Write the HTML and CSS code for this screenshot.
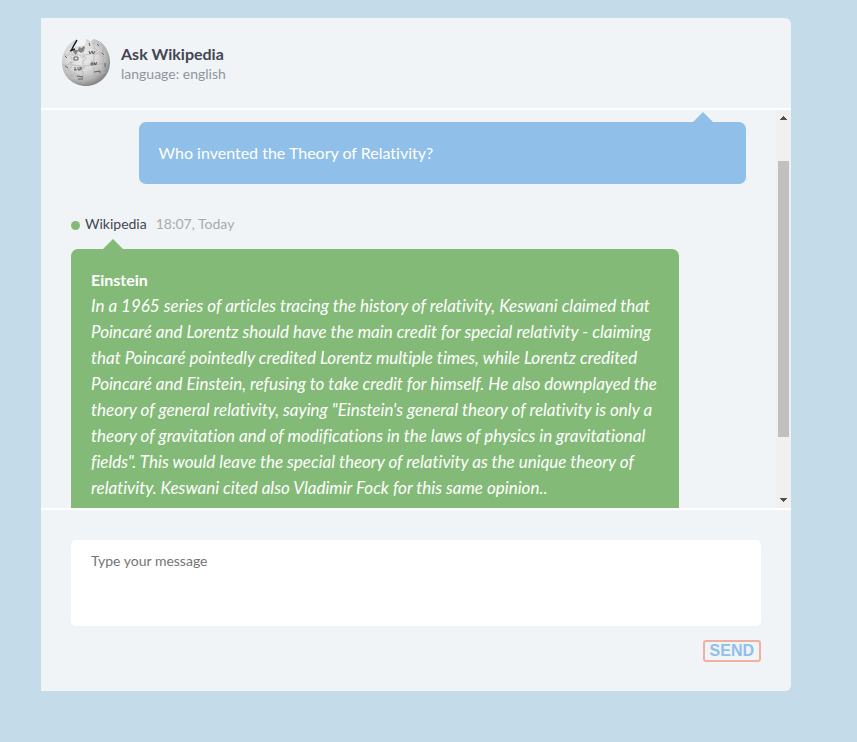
FILE: index.html
```html
<!DOCTYPE html>
<html lang="en">
<head>
<meta charset="utf-8">
<title>Ask Wikipedia</title>
<link rel="stylesheet" href="styles.css">
</head>
<body>
<main class="chat">
  <header class="chat-header">
    <svg class="avatar" viewBox="0 0 50 50" aria-hidden="true">
      <defs>
        <radialGradient id="globe" cx="40%" cy="36%" r="64%">
          <stop offset="0" stop-color="#eeeeee"/>
          <stop offset=".5" stop-color="#dadada"/>
          <stop offset=".8" stop-color="#b8b8b8"/>
          <stop offset="1" stop-color="#888888"/>
        </radialGradient>
      </defs>
      <path fill="url(#globe)" d="M11 4 L14 2 L16 5 L20 2 L24 3 L26 1 L29 3 L33 1 L38 3 C45 7 49 16 49 24 C49 38 38 48 25 48 C12 48 1 38 1 25 C1 16 5 8 11 4Z"/>
      <path fill="#f0f4f7" d="M15 0 L24 0 L25 5 L22 8 L15 8 L12 11 L16 3Z M27 0 h5 l-2 4z"/>
      <path fill="#848484" d="M13 12 L17 12 L18 9 L21 10 L22 8 L24 9 L23 13 L20 15 L17 13 L15 17 L12 14Z"/>
      <path fill="none" stroke="#222" stroke-width="1.5" d="M10 13 L13 7 L16 2 M9 13 l5-2"/>
      <g fill="none" stroke="#b0b0b0" stroke-width=".7">
        <path d="M3 17 h5 c-1-4 4-4 3 0 h9 c-1 4 4 4 3 0 l7-1 c-1-4 4-4 3 0 l9-2"/>
        <path d="M1 27 h7 c-1-4 4-4 3 0 l9 1 c-1 4 4 4 3 0 l8-1 c-1-4 4-4 3 0 l14-3"/>
        <path d="M4 37 l8 1 c-1-4 4-4 3 0 l8 1 c0 3 4 3 3 0 l8-1 c0-4 4-4 3-1 l8-3"/>
        <path d="M10 17 v4 c4-1 4 4 0 3 v6 c-4-1-4 4 0 3 v5 M22 13 v6 c4-1 4 4 0 3 v8 c-4-1-4 4 0 3 v13 M33 4 v7 c4-1 4 4 0 3 v9 c-4-1-4 4 0 3 v17 M42 9 v6 c-4-1-4 4 0 3 v18"/>
      </g>
      <g fill="none" stroke="#555" stroke-width=".9">
        <path d="M13 19 h4 v3 h-4z M28 13 l1 3 2-3 1 3 2-3 M14 29 v3 M13 32 h3 M17 29 v3 h2 v-3 M20 29 v3 M31 24 v4 M33 24 l1 3 2-3 M29 26 h7 M16 38 l6 1 M17 41 h5 M33 34 l6-1 v2 M4 18 l2 2 M4 28 l3 2 M41 15 l2 2 M44 25 v4 M36 6 l2 2 M28 5 l1 3"/>
      </g>
    </svg>
    <div>
      <h1 class="chat-title">Ask Wikipedia</h1>
      <p class="chat-language">language: english</p>
    </div>
  </header>

  <section class="history">
    <div class="messages">
      <p class="bubble bubble-own">Who invented the Theory of Relativity?</p>
      <div class="meta">
        <span class="status"></span>
        <span class="name">Wikipedia</span>
        <time class="time">18:07, Today</time>
      </div>
      <div class="bubble bubble-other">
        <strong>Einstein</strong>
        <em class="extract">In a 1965 series of articles tracing the history of relativity, Keswani claimed that<br>
        Poincaré and Lorentz should have the main credit for special relativity - claiming<br>
        that Poincaré pointedly credited Lorentz multiple times, while Lorentz credited<br>
        Poincaré and Einstein, refusing to take credit for himself. He also downplayed the<br>
        theory of general relativity, saying "Einstein's general theory of relativity is only a<br>
        theory of gravitation and of modifications in the laws of physics in gravitational<br>
        fields". This would leave the special theory of relativity as the unique theory of<br>
        relativity. Keswani cited also Vladimir Fock for this same opinion..</em>
      </div>
    </div>
    <div class="scrollbar" aria-hidden="true">
      <svg class="arrow" viewBox="0 0 15 17" shape-rendering="crispEdges"><path fill="#505050" d="M7 6h1v1h1v1h1v1h1v1H4V9h1V8h1V7h1z"/></svg>
      <div class="track"><div class="thumb"></div></div>
      <svg class="arrow" viewBox="0 0 15 17" shape-rendering="crispEdges"><path fill="#505050" d="M4 7h7v1h-1v1H9v1H8v1H7v-1H6V9H5V8H4z"/></svg>
    </div>
  </section>

  <form class="composer">
    <textarea class="input" aria-label="Message" placeholder="Type your message"></textarea>
    <button class="send" type="button">SEND</button>
  </form>
</main>
</body>
</html>
```
FILE: styles.css
```css
* {
  box-sizing: border-box;
}

body {
  margin: 0;
  padding: 18px 66px 50px 41px;
  background: #c4dce9;
  color: #434651;
  font: 14px/20px Lato, "Liberation Sans", sans-serif;
  font-variant-ligatures: none;
}

.chat {
  background: #f0f4f7;
  border-radius: 0 6px 6px 0;
}

.chat-header {
  display: flex;
  align-items: center;
  gap: 10px;
  padding: 20px;
}

.avatar {
  width: 50px;
  height: 50px;
}

.chat-title,
.chat-language {
  margin: 0;
}

.chat-title {
  padding-top: 2px;
  font-size: 16px;
  font-weight: 700;
  line-height: 20px;
}

.chat-language {
  color: #92959e;
}

.history {
  display: flex;
  height: 402px;
  border-top: 2px solid #fff;
  border-bottom: 2px solid #fff;
}

.messages {
  flex: 1;
  padding: 12px 30px 0;
  overflow: hidden;
}

.bubble {
  position: relative;
  width: 90%;
  margin: 0;
  padding: 18px 20px;
  border-radius: 7px;
  color: #fff;
  font-size: 16px;
  line-height: 26px;
}

.bubble::after {
  content: "";
  position: absolute;
  bottom: 100%;
  border: 10px solid transparent;
  border-top-width: 0;
}

.bubble-own {
  margin-left: auto;
  background: #90bfe9;
}

.bubble-own::after {
  right: 33px;
  border-bottom-color: #90bfe9;
}

.bubble-other {
  background: #84ba78;
}

.bubble-other::after {
  left: 32px;
  border-bottom-color: #84ba78;
}

.extract {
  display: block;
  font-size: 17px;
  white-space: nowrap;
}

.meta {
  display: flex;
  align-items: center;
  margin: 30px 0 15px;
}

.status {
  width: 9px;
  height: 9px;
  margin: 2px 5px 0 0;
  border-radius: 50%;
  background: #84ba78;
}

.time {
  margin-left: 9px;
  color: #a8aab1;
}

.scrollbar {
  display: flex;
  flex-direction: column;
  width: 15px;
  background: #f0f0f0;
}

.arrow {
  height: 17px;
}

.track {
  flex: 1;
  padding: 34px 2px 0;
}

.thumb {
  height: 276px;
  background: #c0c0c0;
}

.composer {
  display: flex;
  flex-direction: column;
  align-items: flex-end;
  gap: 14px;
  padding: 30px 30px 29px;
}

.input {
  display: block;
  width: 100%;
  height: 86px;
  padding: 10px 20px;
  border: 0;
  border-radius: 5px;
  background: #fff;
  color: #434651;
  font: 14px/22px Lato, "Liberation Sans", sans-serif;
  resize: none;
}

.input::placeholder {
  color: #757575;
}

.send {
  height: 22px;
  padding: 0 5px;
  border: 2px solid #efb09f;
  border-radius: 3px;
  background: transparent;
  color: #90bfe9;
  font: bold 16px/18px "Liberation Sans", Arial, sans-serif;
}
```
